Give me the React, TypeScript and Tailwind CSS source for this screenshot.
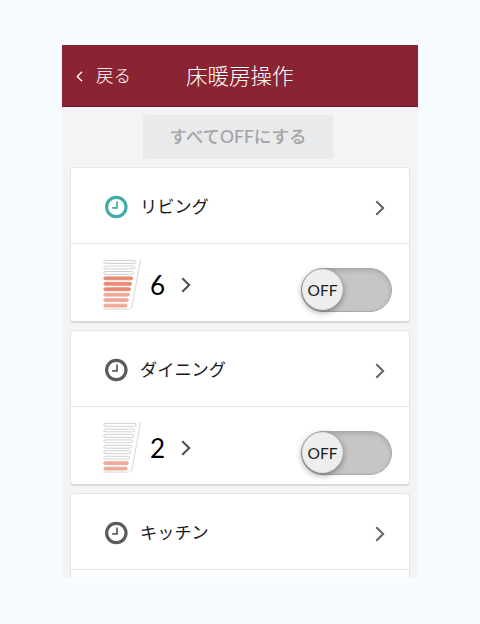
import clsx from "clsx"

type Room = {
  name: string
  level?: number
  timer: boolean
}

const rooms: Room[] = [
  { name: "リビング", level: 6, timer: true },
  { name: "ダイニング", level: 2, timer: false },
  { name: "キッチン", timer: false },
]

const BAR_COUNT = 9

const ClockIcon = ({ active }: { active: boolean }) => (
  <svg
    viewBox="0 0 24 24"
    className={clsx(
      "mt-0.5 h-6 w-6 shrink-0",
      active ? "text-[#42ada8]" : "text-[#5a5b5d]",
    )}
    fill="none"
    stroke="currentColor"
  >
    <circle cx="12.3" cy="12" r="9.7" strokeWidth="3.2" />
    <path d="M13 6.6v6.2H8.2" strokeWidth="1.7" />
  </svg>
)

const Chevron = ({ className }: { className?: string }) => (
  <svg
    viewBox="0 0 10 16"
    className={clsx("shrink-0", className)}
    fill="none"
    stroke="currentColor"
    strokeWidth="2"
  >
    <path d="M1.3 1.2 8.2 8l-6.9 6.8" />
  </svg>
)

const LevelMeter = ({ level }: { level: number }) => (
  <svg viewBox="0 0 40 54" className="mt-1 h-[54px] w-10 shrink-0" fill="none">
    <path
      d="M38.6 1.2 30.4 46.5Q29.5 51.2 26 51.2H.7"
      stroke="#dededf"
      strokeWidth="1.2"
    />
    {Array.from({ length: BAR_COUNT }, (_, i) => {
      // bars are counted from the bottom, the lower three are paler
      const step = BAR_COUNT - i
      const on = step <= level
      const color = step <= 3 ? "#f1a997" : "#e98b73"
      return (
        <rect
          key={step}
          x="1.8"
          y={2.6 + i * 5.45}
          width={32.2 - i * 1.1}
          height="2.8"
          rx="1.4"
          fill={on ? color : "#fff"}
          stroke={on ? color : "#d0d2d3"}
          strokeWidth="1"
        />
      )
    })}
  </svg>
)

const OffSwitch = () => (
  <button className="relative block h-11 w-[91px] rounded-full border border-[#a9a9a9] bg-[#c6c6c6] shadow-[inset_0_2px_4px_rgba(0,0,0,0.14)]">
    <span className="absolute top-0 left-0 flex h-[41px] w-[41px] items-center justify-center rounded-full border border-[#e2e2e2] bg-[#eeeeee] pt-1 text-[15.5px] text-[#1c1c1e] shadow-[0_2px_6px_rgba(0,0,0,0.4)]">
      OFF
    </span>
  </button>
)

const RoomCard = ({ room }: { room: Room }) => (
  <section className="h-[156px] shrink-0 rounded-[3px] border border-b-2 border-[#e5e5e6] border-b-[#dadadb] bg-white">
    <div className="flex h-[76px] items-center border-b border-[#e5e5e6] pr-6 pl-[33px]">
      <ClockIcon active={room.timer} />
      <span className="mt-0.5 ml-3 text-[17.2px] leading-6 text-[#19191b]">
        {room.name}
      </span>
      <Chevron className="mt-1 ml-auto h-4 w-2.5 text-[#626263]" />
    </div>
    {room.level !== undefined && (
      <div className="flex h-[77px] items-center pr-[17px] pl-[31px]">
        <LevelMeter level={room.level} />
        <span className="mt-1 ml-[7px] w-[17px] text-center text-[26px] leading-8 text-black">
          {room.level}
        </span>
        <Chevron className="mt-1 ml-[15px] h-4 w-2.5 text-[#4b4b4d]" />
        <div className="mt-3.5 ml-auto">
          <OffSwitch />
        </div>
      </div>
    )}
  </section>
)

const App = () => {
  return (
    <div className="h-[624px] w-[480px] bg-[#f6fbff] px-[62px] pt-[45px] font-['Lato','Noto_Sans_CJK_JP',sans-serif]">
      <main className="flex h-[532px] flex-col overflow-hidden bg-[#f4f4f6]">
        <header className="grid h-[62px] shrink-0 grid-cols-[124px_1fr] items-center border-b border-[#7a1525] bg-[#8b2432] text-white">
          <button className="flex items-center pt-px pl-[13px] text-[17.5px] font-light">
            <Chevron className="mr-3 h-[11px] w-[9px] rotate-180" />
            戻る
          </button>
          <h1 className="text-[21.5px] leading-8 font-light">床暖房操作</h1>
        </header>
        <button className="mt-2 ml-[81px] h-[44px] w-[190px] shrink-0 rounded-[2px] bg-[#e9eaec] text-[17.5px] font-medium text-[#a3a4a5]">
          すべてOFFにする
        </button>
        <div className="mx-2 mt-2 flex flex-col gap-[7px]">
          {rooms.map((room) => (
            <RoomCard key={room.name} room={room} />
          ))}
        </div>
      </main>
    </div>
  )
}

export default App
